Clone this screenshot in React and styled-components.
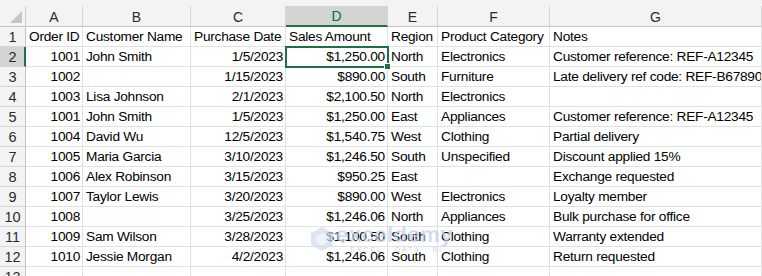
import React from "react";
import styled, { createGlobalStyle, css } from "styled-components";

const Global = createGlobalStyle`
  html, body { margin: 0; padding: 0; background: #fff; }
  body { font-family: "Liberation Sans", Arial, sans-serif; overflow: hidden; }
`;

const COLS = [26, 57, 108, 95, 102, 50, 112, 212];
const LETTERS = ["A", "B", "C", "D", "E", "F", "G"];
const SEL_COL = 3;
const SEL_ROW = 2;

const rows = [
  ["Order ID", "Customer Name", "Purchase Date", "Sales Amount", "Region", "Product Category", "Notes"],
  ["1001", "John Smith", "1/5/2023", "$1,250.00", "North", "Electronics", "Customer reference: REF-A12345"],
  ["1002", "", "1/15/2023", "$890.00", "South", "Furniture", "Late delivery ref code: REF-B67890"],
  ["1003", "Lisa Johnson", "2/1/2023", "$2,100.50", "North", "Electronics", ""],
  ["1001", "John Smith", "1/5/2023", "$1,250.00", "East", "Appliances", "Customer reference: REF-A12345"],
  ["1004", "David Wu", "12/5/2023", "$1,540.75", "West", "Clothing", "Partial delivery"],
  ["1005", "Maria Garcia", "3/10/2023", "$1,246.50", "South", "Unspecified", "Discount applied 15%"],
  ["1006", "Alex Robinson", "3/15/2023", "$950.25", "East", "", "Exchange requested"],
  ["1007", "Taylor Lewis", "3/20/2023", "$890.00", "West", "Electronics", "Loyalty member"],
  ["1008", "", "3/25/2023", "$1,246.06", "North", "Appliances", "Bulk purchase for office"],
  ["1009", "Sam Wilson", "3/28/2023", "$1,100.50", "South", "Clothing", "Warranty extended"],
  ["1010", "Jessie Morgan", "4/2/2023", "$1,246.06", "South", "Clothing", "Return requested"],
  ["", "", "", "", "", "", ""],
];

const RIGHT_COLS = [0, 2, 3];

const Sheet = styled.div`
  position: relative;
  width: 762px;
  height: 276px;
  overflow: hidden;
  background: #fff;
  padding-top: 6px;
  box-sizing: border-box;
  &::before {
    content: "";
    position: absolute;
    left: 0; top: 0; right: 0; height: 6px;
    background: #f3f3f3;
  }
`;

const Grid = styled.div`
  display: grid;
  grid-template-columns: ${COLS.map((c) => c + "px").join(" ")};
  grid-auto-rows: 20px;
  grid-template-rows: 21px;
`;

const Corner = styled.div`
  position: relative;
  background: #f3f3f3;
  border-right: 1px solid #cfcfcf;
  border-bottom: 1px solid #c4c4c4;
  box-sizing: border-box;
  &::after {
    content: "";
    position: absolute;
    right: 3px;
    bottom: 3px;
    width: 0;
    height: 0;
    border-left: 12px solid transparent;
    border-bottom: 12px solid #c6c6c6;
  }
`;

const ColHead = styled.div`
  box-sizing: border-box;
  background: #f3f3f3;
  border-right: 1px solid #d6d6d6;
  border-bottom: 1px solid #c4c4c4;
  display: flex;
  align-items: center;
  justify-content: center;
  font-size: 14px;
  color: #2b2b2b;
  padding-top: 1px;
  ${(p) =>
    p.$selected &&
    css`
      background: #d3d3d3;
      color: #0f6b38;
      border-bottom: 2px solid #1b7343;
    `}
`;

const RowHead = styled.div`
  box-sizing: border-box;
  background: #f3f3f3;
  border-right: 1px solid #c4c4c4;
  border-bottom: 1px solid #d6d6d6;
  display: flex;
  align-items: center;
  justify-content: center;
  font-size: 14.5px;
  color: #2b2b2b;
  ${(p) =>
    p.$selected &&
    css`
      background: #d3d3d3;
      border-right: 2px solid #1b7343;
      padding-left: 1px;
    `}
`;

const Cell = styled.div`
  position: relative;
  box-sizing: border-box;
  border-right: 1px solid #e1e1e1;
  border-bottom: 1px solid #e1e1e1;
  display: flex;
  align-items: center;
  justify-content: ${(p) => (p.$right ? "flex-end" : "flex-start")};
  padding: 0 2px 0 3px;
  font-size: 13.7px;
  letter-spacing: -0.25px;
  color: #000;
  white-space: nowrap;
  overflow: ${(p) => (p.$selected ? "visible" : "hidden")};
  ${(p) =>
    p.$selected &&
    css`
      outline: 2px solid #1b7343;
      outline-offset: -1px;
      z-index: 2;
      &::after {
        content: "";
        position: absolute;
        right: -4px;
        bottom: -4px;
        width: 5px;
        height: 5px;
        background: #1b7343;
        border: 1px solid #fff;
      }
    `}
`;

const Watermark = styled.div`
  position: absolute;
  left: 310px;
  top: 224px;
  display: flex;
  align-items: center;
  gap: 2px;
  pointer-events: none;
  opacity: 0.7;
  z-index: 3;
`;

const WmText = styled.div`
  display: flex;
  flex-direction: column;
  line-height: 1;
`;

const WmName = styled.span`
  font-family: "Liberation Sans", Arial, sans-serif;
  font-weight: bold;
  font-size: 22px;
  color: #c3d0ec;
  letter-spacing: 0.5px;
`;

const WmTag = styled.span`
  font-family: "Liberation Sans", Arial, sans-serif;
  font-size: 7px;
  color: #c4c8d2;
  letter-spacing: 2px;
  padding-left: 14px;
`;

export default function App() {
  return (
    <>
      <Global />
      <Sheet>
        <Grid>
          <Corner />
          {LETTERS.map((l, i) => (
            <ColHead key={l} $selected={i === SEL_COL}>
              {l}
            </ColHead>
          ))}
          {rows.map((r, ri) => (
            <React.Fragment key={ri}>
              <RowHead $selected={ri + 1 === SEL_ROW}>{ri + 1}</RowHead>
              {r.map((v, ci) => (
                <Cell
                  key={ci}
                  $right={ri > 0 && RIGHT_COLS.includes(ci)}
                  $selected={ri + 1 === SEL_ROW && ci === SEL_COL}
                >
                  {v}
                </Cell>
              ))}
            </React.Fragment>
          ))}
        </Grid>
        <Watermark>
          <svg width="24" height="26" viewBox="0 0 24 26">
            <path d="M12 1 L23 7 L23 19 L12 25 L1 19 L1 7 Z" fill="#d0daf0" />
            <path d="M12 7 L18 10.5 L18 16 L12 19.5 L6 16 L6 10.5 Z" fill="#e8edf8" />
          </svg>
          <WmText>
            <WmName>exceldemy</WmName>
            <WmTag>EXCEL · DATA · BI</WmTag>
          </WmText>
        </Watermark>
      </Sheet>
    </>
  );
}
